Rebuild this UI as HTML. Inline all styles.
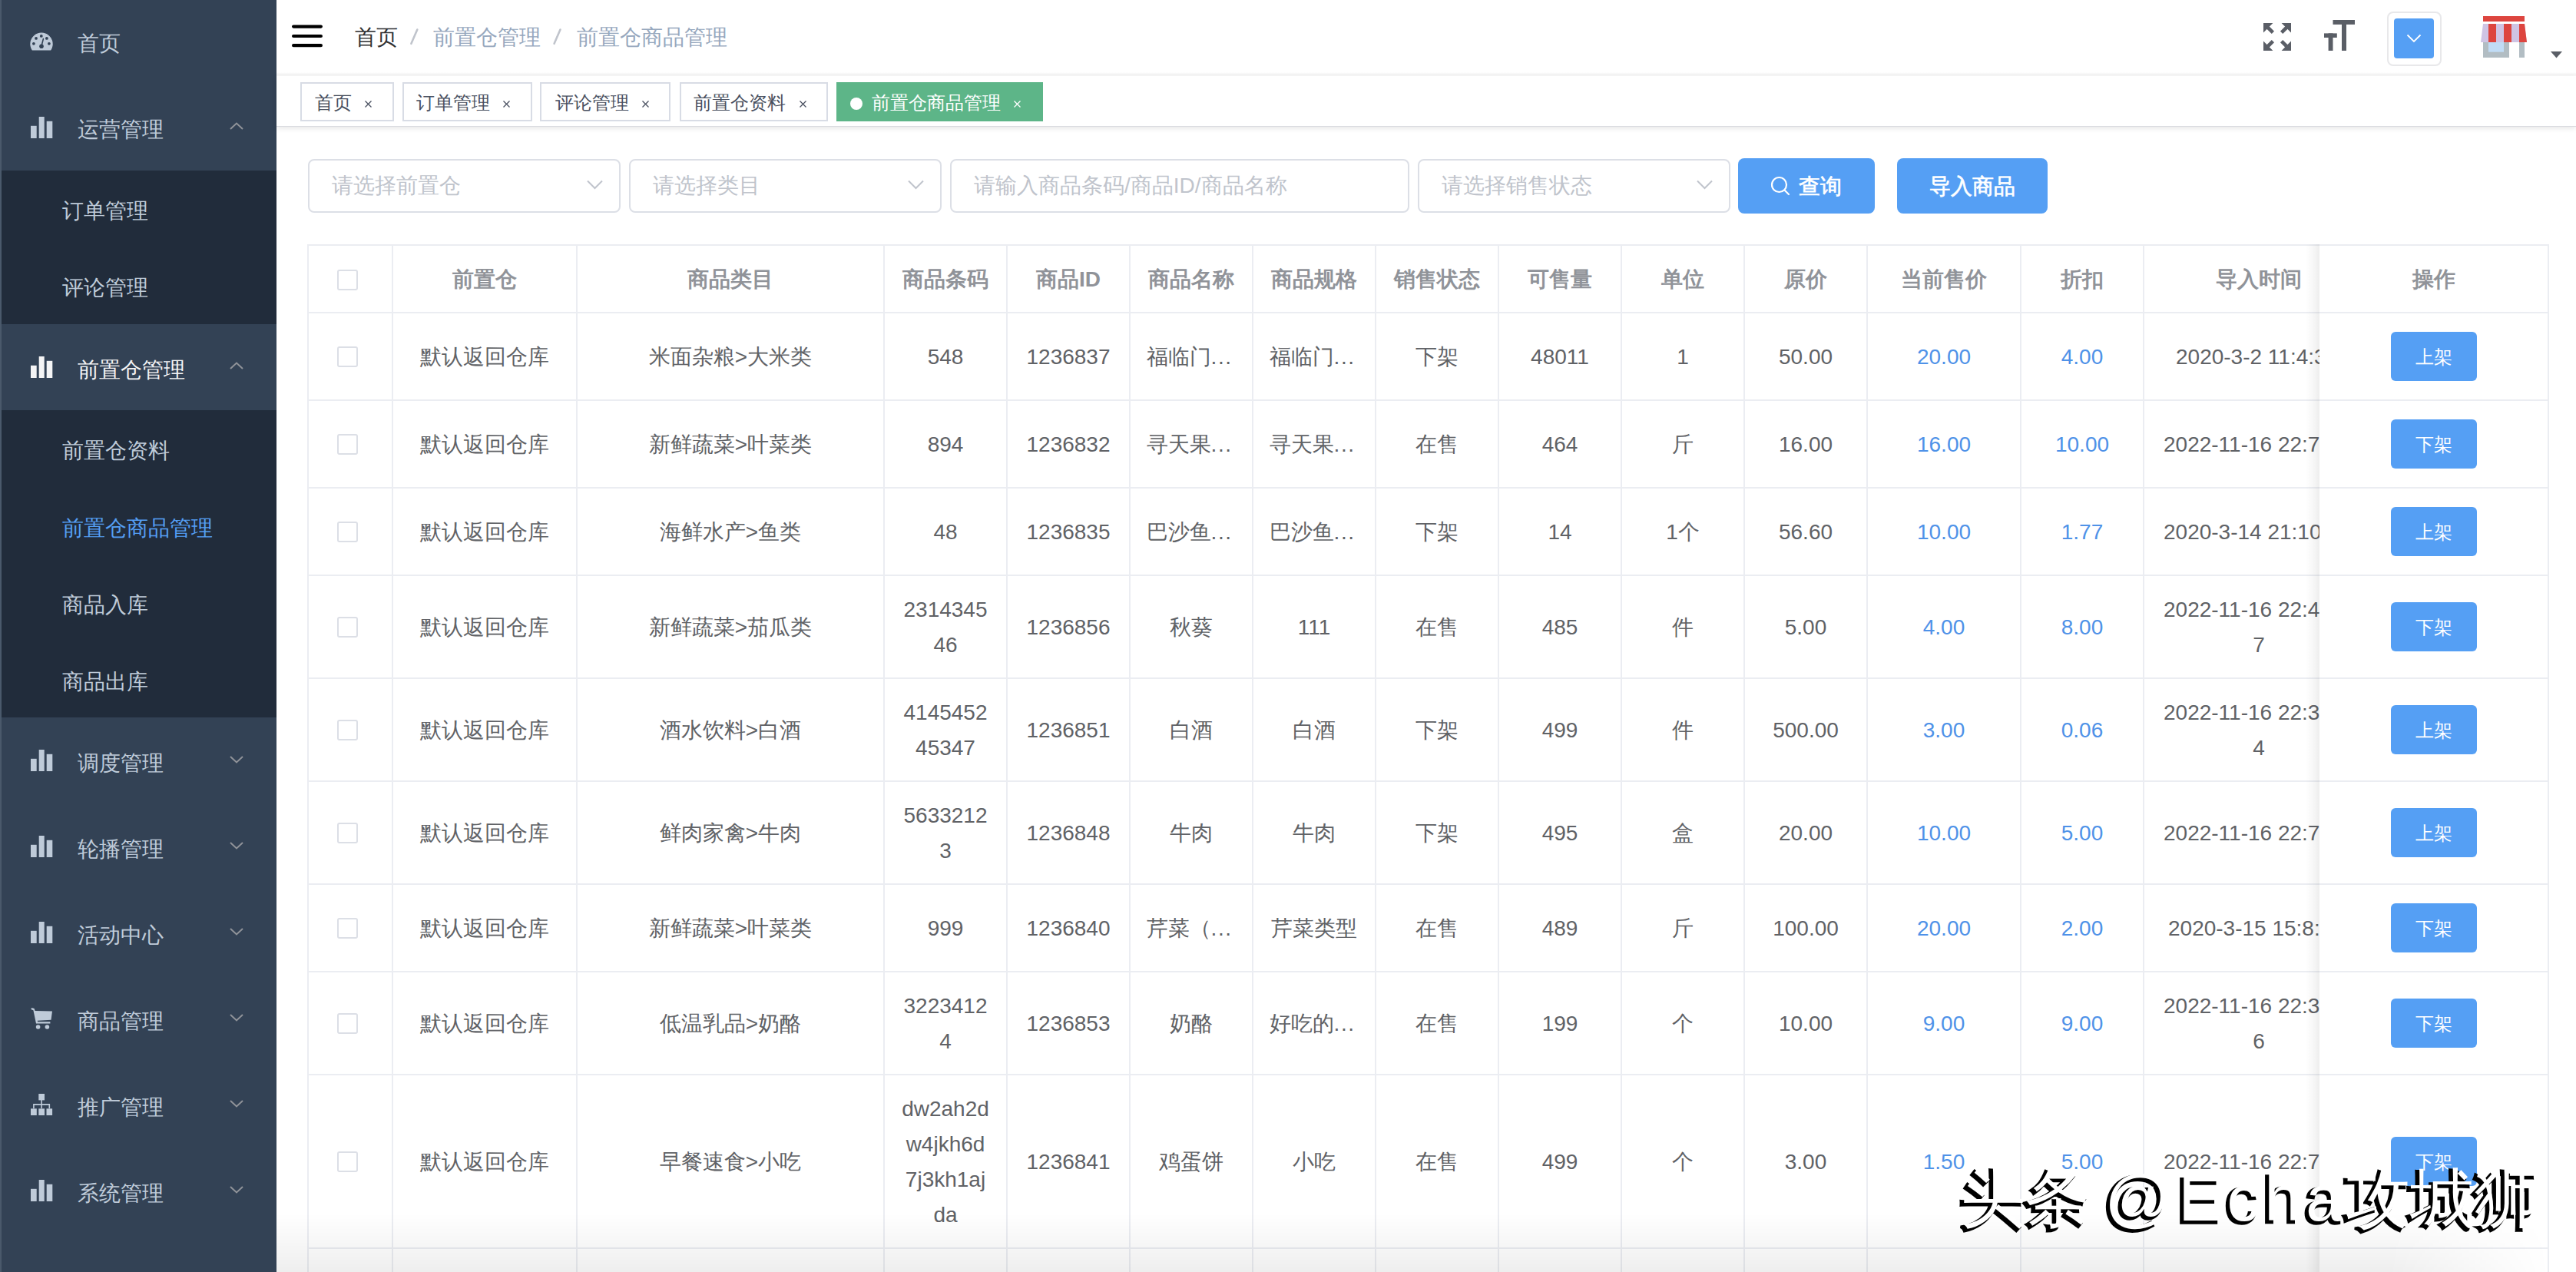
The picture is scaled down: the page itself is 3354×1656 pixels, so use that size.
<!DOCTYPE html><html><head><meta charset="utf-8"><style>
html,body{margin:0;padding:0;}
body{width:3354px;height:1656px;overflow:hidden;position:relative;background:#fff;font-family:"Liberation Sans",sans-serif;}
.a{position:absolute;}
.t{position:absolute;white-space:nowrap;}
svg{position:absolute;overflow:visible;}
</style></head><body><div class="a" style="left:0px;top:0px;width:360px;height:1656px;background:#334255;"></div><div class="a" style="left:0px;top:0px;width:2px;height:1656px;background:#4a596b;"></div><div class="a" style="left:2px;top:222px;width:358px;height:200px;background:#212c3b;"></div><div class="a" style="left:2px;top:534.2px;width:358px;height:400px;background:#212c3b;"></div><svg style="left:34px;top:36px" width="40" height="36" viewBox="34 36 40 36"><path d="M42.2 65 A14.1 14.1 0 1 1 65.8 65 Z" fill="#bfcbd9" stroke="#bfcbd9" stroke-width="1.2" stroke-linejoin="round"/><g fill="#334255"><circle cx="53.8" cy="46.9" r="1.9"/><circle cx="47" cy="49.9" r="1.9"/><circle cx="60.9" cy="49.9" r="1.9"/><circle cx="43.9" cy="56.8" r="1.9"/><circle cx="63.9" cy="56.8" r="1.9"/><circle cx="54" cy="60.2" r="2.8"/></g><path d="M54 60 L56.4 50.6" stroke="#334255" stroke-width="1.6" stroke-linecap="round"/></svg><div class="t" style="left:100.5px;top:37.0px;font-size:28px;line-height:40px;color:#bfcbd9;font-weight:normal;">首页</div><svg style="left:40px;top:152px" width="28" height="28" viewBox="0 0 28 28"><rect x="0" y="11.8" width="7.7" height="16.2" fill="#bfcbd9"/><rect x="10.7" y="0" width="7" height="28" fill="#bfcbd9"/><rect x="20.7" y="5.8" width="7.6" height="22.2" fill="#bfcbd9"/></svg><div class="t" style="left:100.5px;top:149.2px;font-size:28px;line-height:40px;color:#bfcbd9;font-weight:normal;">运营管理</div><svg style="left:298.5px;top:158.5px" width="18" height="10" viewBox="0 0 18 10"><path d="M1 9 L9 1.5 L17 9" fill="none" stroke="#909399" stroke-width="2"/></svg><div class="t" style="left:80.5px;top:255.2px;font-size:28px;line-height:40px;color:#bfcbd9;font-weight:normal;">订单管理</div><div class="t" style="left:80.5px;top:355.2px;font-size:28px;line-height:40px;color:#bfcbd9;font-weight:normal;">评论管理</div><svg style="left:40px;top:464px" width="28" height="28" viewBox="0 0 28 28"><rect x="0" y="11.8" width="7.7" height="16.2" fill="#f4f4f5"/><rect x="10.7" y="0" width="7" height="28" fill="#f4f4f5"/><rect x="20.7" y="5.8" width="7.6" height="22.2" fill="#f4f4f5"/></svg><div class="t" style="left:100.5px;top:461.6px;font-size:28px;line-height:40px;color:#f4f4f5;font-weight:normal;">前置仓管理</div><svg style="left:298.5px;top:470.5px" width="18" height="10" viewBox="0 0 18 10"><path d="M1 9 L9 1.5 L17 9" fill="none" stroke="#909399" stroke-width="2"/></svg><div class="t" style="left:80.5px;top:567.3px;font-size:28px;line-height:40px;color:#bfcbd9;font-weight:normal;">前置仓资料</div><div class="t" style="left:80.5px;top:668.0px;font-size:28px;line-height:40px;color:#559ff4;font-weight:normal;">前置仓商品管理</div><div class="t" style="left:80.5px;top:767.8px;font-size:28px;line-height:40px;color:#bfcbd9;font-weight:normal;">商品入库</div><div class="t" style="left:80.5px;top:867.8px;font-size:28px;line-height:40px;color:#bfcbd9;font-weight:normal;">商品出库</div><svg style="left:40px;top:976.1px" width="28" height="28" viewBox="0 0 28 28"><rect x="0" y="11.8" width="7.7" height="16.2" fill="#bfcbd9"/><rect x="10.7" y="0" width="7" height="28" fill="#bfcbd9"/><rect x="20.7" y="5.8" width="7.6" height="22.2" fill="#bfcbd9"/></svg><div class="t" style="left:100.5px;top:974.1px;font-size:28px;line-height:40px;color:#bfcbd9;font-weight:normal;">调度管理</div><svg style="left:299px;top:983.65px" width="18" height="10" viewBox="0 0 18 10"><path d="M1 1 L9 8.5 L17 1" fill="none" stroke="#909399" stroke-width="2"/></svg><svg style="left:40px;top:1088.1px" width="28" height="28" viewBox="0 0 28 28"><rect x="0" y="11.8" width="7.7" height="16.2" fill="#bfcbd9"/><rect x="10.7" y="0" width="7" height="28" fill="#bfcbd9"/><rect x="20.7" y="5.8" width="7.6" height="22.2" fill="#bfcbd9"/></svg><div class="t" style="left:100.5px;top:1086.1px;font-size:28px;line-height:40px;color:#bfcbd9;font-weight:normal;">轮播管理</div><svg style="left:299px;top:1095.6499999999999px" width="18" height="10" viewBox="0 0 18 10"><path d="M1 1 L9 8.5 L17 1" fill="none" stroke="#909399" stroke-width="2"/></svg><svg style="left:40px;top:1200.1px" width="28" height="28" viewBox="0 0 28 28"><rect x="0" y="11.8" width="7.7" height="16.2" fill="#bfcbd9"/><rect x="10.7" y="0" width="7" height="28" fill="#bfcbd9"/><rect x="20.7" y="5.8" width="7.6" height="22.2" fill="#bfcbd9"/></svg><div class="t" style="left:100.5px;top:1198.1px;font-size:28px;line-height:40px;color:#bfcbd9;font-weight:normal;">活动中心</div><svg style="left:299px;top:1207.6499999999999px" width="18" height="10" viewBox="0 0 18 10"><path d="M1 1 L9 8.5 L17 1" fill="none" stroke="#909399" stroke-width="2"/></svg><svg style="left:40px;top:1312.1px" width="28" height="28" viewBox="0 0 28 28"><path d="M0.5 1.2 Q0.5 0 2 0.2 L4.6 0.9 L5.6 4 L28 4.5 L26.5 15.8 L8.8 16.8 L9 18.2 L25.4 18.2 L25.4 20.6 L7 20.6 L3.4 3.2 L1.4 2.6 Q0.5 2.4 0.5 1.2 Z" fill="#bfcbd9"/><circle cx="9.6" cy="25" r="2.8" fill="#bfcbd9"/><circle cx="21.4" cy="25" r="2.8" fill="#bfcbd9"/></svg><div class="t" style="left:100.5px;top:1310.1px;font-size:28px;line-height:40px;color:#bfcbd9;font-weight:normal;">商品管理</div><svg style="left:299px;top:1319.6499999999999px" width="18" height="10" viewBox="0 0 18 10"><path d="M1 1 L9 8.5 L17 1" fill="none" stroke="#909399" stroke-width="2"/></svg><svg style="left:40px;top:1424.1px" width="28" height="28" viewBox="0 0 28 28"><rect x="10.3" y="0" width="7.7" height="8.4" fill="#bfcbd9"/><path d="M14.1 8 V19 M3.9 19 V13.9 H24.3 V19" fill="none" stroke="#bfcbd9" stroke-width="1.6"/><rect x="0" y="19.3" width="7.8" height="8.7" fill="#bfcbd9"/><rect x="10.3" y="19.3" width="7.7" height="8.7" fill="#bfcbd9"/><rect x="20.5" y="19.3" width="7.6" height="8.7" fill="#bfcbd9"/></svg><div class="t" style="left:100.5px;top:1422.1px;font-size:28px;line-height:40px;color:#bfcbd9;font-weight:normal;">推广管理</div><svg style="left:299px;top:1431.6499999999999px" width="18" height="10" viewBox="0 0 18 10"><path d="M1 1 L9 8.5 L17 1" fill="none" stroke="#909399" stroke-width="2"/></svg><svg style="left:40px;top:1536.1px" width="28" height="28" viewBox="0 0 28 28"><rect x="0" y="11.8" width="7.7" height="16.2" fill="#bfcbd9"/><rect x="10.7" y="0" width="7" height="28" fill="#bfcbd9"/><rect x="20.7" y="5.8" width="7.6" height="22.2" fill="#bfcbd9"/></svg><div class="t" style="left:100.5px;top:1534.1px;font-size:28px;line-height:40px;color:#bfcbd9;font-weight:normal;">系统管理</div><svg style="left:299px;top:1543.6499999999999px" width="18" height="10" viewBox="0 0 18 10"><path d="M1 1 L9 8.5 L17 1" fill="none" stroke="#909399" stroke-width="2"/></svg><div class="a" style="left:360px;top:94px;width:2994px;height:6px;background:linear-gradient(to bottom,rgba(0,0,0,0),rgba(0,0,0,.045) 50%,rgba(0,0,0,0));"></div><svg style="left:378px;top:30px" width="44" height="34" viewBox="0 0 44 34"><path d="M4.1 4.6 H39.9 M4.1 17 H39.9 M4.1 29.2 H39.9" stroke="#000" stroke-width="4.2" stroke-linecap="round"/></svg><div class="t" style="left:461.5px;top:28.5px;font-size:28px;line-height:40px;color:#303133;font-weight:normal;">首页</div><svg style="left:530px;top:34px" width="18" height="28" viewBox="530 34 18 28"><path d="M535.4 56.8 L543.3 38.5" stroke="#c0c4cc" stroke-width="2.6" stroke-linecap="round"/></svg><div class="t" style="left:563.5px;top:28.5px;font-size:28px;line-height:40px;color:#97a8be;font-weight:normal;">前置仓管理</div><svg style="left:716px;top:34px" width="18" height="28" viewBox="716 34 18 28"><path d="M721.6 56.8 L729.5 38.5" stroke="#c0c4cc" stroke-width="2.6" stroke-linecap="round"/></svg><div class="t" style="left:750.5px;top:28.5px;font-size:28px;line-height:40px;color:#97a8be;font-weight:normal;">前置仓商品管理</div><svg style="left:2947px;top:30px" width="36" height="36" viewBox="0 0 36 36"><g fill="#5a5e66"><path d="M0 0 H12.4 L0 12.4 Z M36 0 H23.6 L36 12.4 Z M0 36 H12.4 L0 23.6 Z M36 36 H23.6 L36 23.6 Z"/></g><g stroke="#5a5e66" stroke-width="4.6"><path d="M4 4 L12.4 12.4 M32 4 L23.6 12.4 M4 32 L12.4 23.6 M32 32 L23.6 23.6"/></g></svg><svg style="left:3026px;top:26px" width="40" height="40" viewBox="0 0 40 40"><g fill="#5a5e66"><rect x="0" y="17.4" width="16.8" height="5.6"/><rect x="5.6" y="17.4" width="5.9" height="22.6"/><rect x="11.5" y="0" width="28.5" height="5.9"/><rect x="23" y="0" width="6" height="40"/></g></svg><div class="a" style="left:3107.5px;top:14.5px;width:67.5px;height:67px;border:2px solid #e8e8ea;border-radius:8px;"></div><div class="a" style="left:3117px;top:24px;width:52px;height:51.5px;background:#559ff4;border-radius:4px;"></div><svg style="left:3133px;top:44px" width="20" height="12" viewBox="0 0 20 12"><path d="M1.5 1.5 L10 10 L18.5 1.5" fill="none" stroke="#fff" stroke-width="1.8"/></svg><svg style="left:3230px;top:21px" width="60" height="54" viewBox="0 0 60 54"><rect x="3" y="0" width="54" height="7" fill="#dd453f"/><path d="M3 10 H57 L60 34 H0 Z" fill="#cfc4e4"/><path d="M10 10 H20 V34 H10 Z M30 10 H40 V34 H30 Z M50 10 H57 L60 34 H50 Z" fill="#dd453f"/><rect x="3" y="34" width="34" height="20" fill="#b2bdc3"/><rect x="10" y="34" width="20" height="12.7" fill="#c1dcf6"/><rect x="50" y="34" width="7" height="20" fill="#b2bdc3"/></svg><svg style="left:3321px;top:67px" width="15" height="9" viewBox="0 0 15 9"><path d="M0 0 H15 L7.5 8.5 Z" fill="#5a5e66"/></svg><div class="a" style="left:360px;top:99px;width:2994px;height:64.7px;background:#fff;border-bottom:1.6px solid #d9dadf;box-shadow:0 2px 7px 0 rgba(0,0,0,.10);"></div><div class="a" style="left:390.5px;top:106.5px;width:118.0px;height:47px;border:2px solid #d8dce5;background:#fff;"></div><div class="t" style="left:409.5px;top:114.4px;font-size:24px;line-height:40px;color:#495060;font-weight:normal;">首页</div><svg style="left:475px;top:131px" width="9" height="9" viewBox="0 0 9 9"><path d="M0.5 0.5 L8.5 8.5 M8.5 0.5 L0.5 8.5" stroke="#495060" stroke-width="1.3"/></svg><div class="a" style="left:523.5px;top:106.5px;width:165.0px;height:47px;border:2px solid #d8dce5;background:#fff;"></div><div class="t" style="left:542px;top:114.4px;font-size:24px;line-height:40px;color:#495060;font-weight:normal;">订单管理</div><svg style="left:654.5px;top:131px" width="9" height="9" viewBox="0 0 9 9"><path d="M0.5 0.5 L8.5 8.5 M8.5 0.5 L0.5 8.5" stroke="#495060" stroke-width="1.3"/></svg><div class="a" style="left:703px;top:106.5px;width:166px;height:47px;border:2px solid #d8dce5;background:#fff;"></div><div class="t" style="left:722.5px;top:114.4px;font-size:24px;line-height:40px;color:#495060;font-weight:normal;">评论管理</div><svg style="left:835.5px;top:131px" width="9" height="9" viewBox="0 0 9 9"><path d="M0.5 0.5 L8.5 8.5 M8.5 0.5 L0.5 8.5" stroke="#495060" stroke-width="1.3"/></svg><div class="a" style="left:884.6px;top:106.5px;width:189.80000000000007px;height:47px;border:2px solid #d8dce5;background:#fff;"></div><div class="t" style="left:903px;top:114.4px;font-size:24px;line-height:40px;color:#495060;font-weight:normal;">前置仓资料</div><svg style="left:1040.7px;top:131px" width="9" height="9" viewBox="0 0 9 9"><path d="M0.5 0.5 L8.5 8.5 M8.5 0.5 L0.5 8.5" stroke="#495060" stroke-width="1.3"/></svg><div class="a" style="left:1089px;top:106.5px;width:269px;height:51px;background:#5db588;"></div><div class="a" style="left:1106.7px;top:126.5px;width:16.3px;height:16.3px;background:#fff;border-radius:50%;"></div><div class="t" style="left:1134.5px;top:114.4px;font-size:24px;line-height:40px;color:#fff;font-weight:normal;">前置仓商品管理</div><svg style="left:1320px;top:131px" width="9" height="9" viewBox="0 0 9 9"><path d="M0.5 0.5 L8.5 8.5 M8.5 0.5 L0.5 8.5" stroke="#fff" stroke-width="1.3"/></svg><div class="a" style="left:401px;top:206.5px;width:403px;height:66.5px;border:2px solid #dcdfe6;border-radius:8px;background:#fff;"></div><div class="t" style="left:432px;top:222.0px;font-size:28px;line-height:40px;color:#c0c4cc;font-weight:normal;">请选择前置仓</div><svg style="left:763.5px;top:234px" width="21" height="13" viewBox="0 0 21 13"><path d="M1 1.5 L10.5 11 L20 1.5" fill="none" stroke="#c0c4cc" stroke-width="2"/></svg><div class="a" style="left:819px;top:206.5px;width:403px;height:66.5px;border:2px solid #dcdfe6;border-radius:8px;background:#fff;"></div><div class="t" style="left:850px;top:222.0px;font-size:28px;line-height:40px;color:#c0c4cc;font-weight:normal;">请选择类目</div><svg style="left:1181.5px;top:234px" width="21" height="13" viewBox="0 0 21 13"><path d="M1 1.5 L10.5 11 L20 1.5" fill="none" stroke="#c0c4cc" stroke-width="2"/></svg><div class="a" style="left:1237px;top:206.5px;width:594px;height:66.5px;border:2px solid #dcdfe6;border-radius:8px;background:#fff;"></div><div class="t" style="left:1268px;top:222.0px;font-size:28px;line-height:40px;color:#c0c4cc;font-weight:normal;">请输入商品条码/商品ID/商品名称</div><div class="a" style="left:1846px;top:206.5px;width:403px;height:66.5px;border:2px solid #dcdfe6;border-radius:8px;background:#fff;"></div><div class="t" style="left:1877px;top:222.0px;font-size:28px;line-height:40px;color:#c0c4cc;font-weight:normal;">请选择销售状态</div><svg style="left:2208.5px;top:234px" width="21" height="13" viewBox="0 0 21 13"><path d="M1 1.5 L10.5 11 L20 1.5" fill="none" stroke="#c0c4cc" stroke-width="2"/></svg><div class="a" style="left:2263px;top:206px;width:178px;height:71.5px;background:#559ff4;border-radius:8px;"></div><svg style="left:2305px;top:229px" width="26" height="26" viewBox="0 0 26 26"><circle cx="11.5" cy="11.5" r="9.5" fill="none" stroke="#fff" stroke-width="2.2"/><path d="M18.5 18.5 L24 24" stroke="#fff" stroke-width="2.2" stroke-linecap="round"/></svg><div class="t" style="left:2342px;top:222.8px;font-size:28px;line-height:40px;color:#fff;font-weight:normal;-webkit-text-stroke:0.7px #fff;">查询</div><div class="a" style="left:2470px;top:206px;width:196px;height:71.5px;background:#559ff4;border-radius:8px;"></div><div class="t" style="left:2512px;top:222.8px;font-size:28px;line-height:40px;color:#fff;font-weight:normal;-webkit-text-stroke:0.7px #fff;">导入商品</div><div class="a" style="left:400px;top:318px;width:2919px;height:2px;background:#ebedf2;"></div><div class="a" style="left:400px;top:406px;width:2919px;height:2px;background:#ebedf2;"></div><div class="a" style="left:400px;top:520px;width:2919px;height:2px;background:#ebedf2;"></div><div class="a" style="left:400px;top:634px;width:2919px;height:2px;background:#ebedf2;"></div><div class="a" style="left:400px;top:748px;width:2919px;height:2px;background:#ebedf2;"></div><div class="a" style="left:400px;top:882px;width:2919px;height:2px;background:#ebedf2;"></div><div class="a" style="left:400px;top:1016px;width:2919px;height:2px;background:#ebedf2;"></div><div class="a" style="left:400px;top:1150px;width:2919px;height:2px;background:#ebedf2;"></div><div class="a" style="left:400px;top:1264px;width:2919px;height:2px;background:#ebedf2;"></div><div class="a" style="left:400px;top:1398px;width:2919px;height:2px;background:#ebedf2;"></div><div class="a" style="left:400px;top:1624px;width:2919px;height:2px;background:#ebedf2;"></div><div class="a" style="left:400px;top:318px;width:2px;height:1338px;background:#ebedf2;"></div><div class="a" style="left:510px;top:318px;width:2px;height:1338px;background:#ebedf2;"></div><div class="a" style="left:750px;top:318px;width:2px;height:1338px;background:#ebedf2;"></div><div class="a" style="left:1150px;top:318px;width:2px;height:1338px;background:#ebedf2;"></div><div class="a" style="left:1310px;top:318px;width:2px;height:1338px;background:#ebedf2;"></div><div class="a" style="left:1470px;top:318px;width:2px;height:1338px;background:#ebedf2;"></div><div class="a" style="left:1630px;top:318px;width:2px;height:1338px;background:#ebedf2;"></div><div class="a" style="left:1790px;top:318px;width:2px;height:1338px;background:#ebedf2;"></div><div class="a" style="left:1950px;top:318px;width:2px;height:1338px;background:#ebedf2;"></div><div class="a" style="left:2110px;top:318px;width:2px;height:1338px;background:#ebedf2;"></div><div class="a" style="left:2270px;top:318px;width:2px;height:1338px;background:#ebedf2;"></div><div class="a" style="left:2430px;top:318px;width:2px;height:1338px;background:#ebedf2;"></div><div class="a" style="left:2630px;top:318px;width:2px;height:1338px;background:#ebedf2;"></div><div class="a" style="left:2790px;top:318px;width:2px;height:1338px;background:#ebedf2;"></div><div class="a" style="left:438.5px;top:350.5px;width:23px;height:23px;border:2px solid #dcdfe6;border-radius:3px;background:#fff;"></div><div class="t" style="left:511px;top:344.0px;font-size:28px;line-height:40px;color:#909399;font-weight:bold;width:240px;text-align:center;">前置仓</div><div class="t" style="left:751px;top:344.0px;font-size:28px;line-height:40px;color:#909399;font-weight:bold;width:400px;text-align:center;">商品类目</div><div class="t" style="left:1151px;top:344.0px;font-size:28px;line-height:40px;color:#909399;font-weight:bold;width:160px;text-align:center;">商品条码</div><div class="t" style="left:1311px;top:344.0px;font-size:28px;line-height:40px;color:#909399;font-weight:bold;width:160px;text-align:center;">商品ID</div><div class="t" style="left:1471px;top:344.0px;font-size:28px;line-height:40px;color:#909399;font-weight:bold;width:160px;text-align:center;">商品名称</div><div class="t" style="left:1631px;top:344.0px;font-size:28px;line-height:40px;color:#909399;font-weight:bold;width:160px;text-align:center;">商品规格</div><div class="t" style="left:1791px;top:344.0px;font-size:28px;line-height:40px;color:#909399;font-weight:bold;width:160px;text-align:center;">销售状态</div><div class="t" style="left:1951px;top:344.0px;font-size:28px;line-height:40px;color:#909399;font-weight:bold;width:160px;text-align:center;">可售量</div><div class="t" style="left:2111px;top:344.0px;font-size:28px;line-height:40px;color:#909399;font-weight:bold;width:160px;text-align:center;">单位</div><div class="t" style="left:2271px;top:344.0px;font-size:28px;line-height:40px;color:#909399;font-weight:bold;width:160px;text-align:center;">原价</div><div class="t" style="left:2431px;top:344.0px;font-size:28px;line-height:40px;color:#909399;font-weight:bold;width:200px;text-align:center;">当前售价</div><div class="t" style="left:2631px;top:344.0px;font-size:28px;line-height:40px;color:#909399;font-weight:bold;width:160px;text-align:center;">折扣</div><div class="t" style="left:2791px;top:344.0px;font-size:28px;line-height:40px;color:#909399;font-weight:bold;width:300px;text-align:center;">导入时间</div><div class="a" style="left:438.5px;top:450.5px;width:23px;height:23px;border:2px solid #dcdfe6;border-radius:3px;background:#fff;"></div><div class="t" style="left:511px;top:445.0px;font-size:28px;line-height:40px;color:#606266;font-weight:normal;width:240px;text-align:center;">默认返回仓库</div><div class="t" style="left:751px;top:445.0px;font-size:28px;line-height:40px;color:#606266;font-weight:normal;width:400px;text-align:center;">米面杂粮&gt;大米类</div><div class="t" style="left:1151px;top:445.0px;font-size:28px;line-height:40px;color:#606266;font-weight:normal;width:160px;text-align:center;">548</div><div class="t" style="left:1311px;top:445.0px;font-size:28px;line-height:40px;color:#606266;font-weight:normal;width:160px;text-align:center;">1236837</div><div class="t" style="left:1492.5px;top:445.0px;font-size:28px;line-height:40px;color:#606266;font-weight:normal;">福临门<span style="letter-spacing:1.6px">...</span></div><div class="t" style="left:1652.5px;top:445.0px;font-size:28px;line-height:40px;color:#606266;font-weight:normal;">福临门<span style="letter-spacing:1.6px">...</span></div><div class="t" style="left:1791px;top:445.0px;font-size:28px;line-height:40px;color:#606266;font-weight:normal;width:160px;text-align:center;">下架</div><div class="t" style="left:1951px;top:445.0px;font-size:28px;line-height:40px;color:#606266;font-weight:normal;width:160px;text-align:center;">48011</div><div class="t" style="left:2111px;top:445.0px;font-size:28px;line-height:40px;color:#606266;font-weight:normal;width:160px;text-align:center;">1</div><div class="t" style="left:2271px;top:445.0px;font-size:28px;line-height:40px;color:#606266;font-weight:normal;width:160px;text-align:center;">50.00</div><div class="t" style="left:2431px;top:445.0px;font-size:28px;line-height:40px;color:#4f92e8;font-weight:normal;width:200px;text-align:center;">20.00</div><div class="t" style="left:2631px;top:445.0px;font-size:28px;line-height:40px;color:#4f92e8;font-weight:normal;width:160px;text-align:center;">4.00</div><div class="t" style="left:2833px;top:445.0px;font-size:28px;line-height:40px;color:#606266;font-weight:normal;">2020-3-2 11:4:36</div><div class="a" style="left:438.5px;top:564.5px;width:23px;height:23px;border:2px solid #dcdfe6;border-radius:3px;background:#fff;"></div><div class="t" style="left:511px;top:559.0px;font-size:28px;line-height:40px;color:#606266;font-weight:normal;width:240px;text-align:center;">默认返回仓库</div><div class="t" style="left:751px;top:559.0px;font-size:28px;line-height:40px;color:#606266;font-weight:normal;width:400px;text-align:center;">新鲜蔬菜&gt;叶菜类</div><div class="t" style="left:1151px;top:559.0px;font-size:28px;line-height:40px;color:#606266;font-weight:normal;width:160px;text-align:center;">894</div><div class="t" style="left:1311px;top:559.0px;font-size:28px;line-height:40px;color:#606266;font-weight:normal;width:160px;text-align:center;">1236832</div><div class="t" style="left:1492.5px;top:559.0px;font-size:28px;line-height:40px;color:#606266;font-weight:normal;">寻天果<span style="letter-spacing:1.6px">...</span></div><div class="t" style="left:1652.5px;top:559.0px;font-size:28px;line-height:40px;color:#606266;font-weight:normal;">寻天果<span style="letter-spacing:1.6px">...</span></div><div class="t" style="left:1791px;top:559.0px;font-size:28px;line-height:40px;color:#606266;font-weight:normal;width:160px;text-align:center;">在售</div><div class="t" style="left:1951px;top:559.0px;font-size:28px;line-height:40px;color:#606266;font-weight:normal;width:160px;text-align:center;">464</div><div class="t" style="left:2111px;top:559.0px;font-size:28px;line-height:40px;color:#606266;font-weight:normal;width:160px;text-align:center;">斤</div><div class="t" style="left:2271px;top:559.0px;font-size:28px;line-height:40px;color:#606266;font-weight:normal;width:160px;text-align:center;">16.00</div><div class="t" style="left:2431px;top:559.0px;font-size:28px;line-height:40px;color:#4f92e8;font-weight:normal;width:200px;text-align:center;">16.00</div><div class="t" style="left:2631px;top:559.0px;font-size:28px;line-height:40px;color:#4f92e8;font-weight:normal;width:160px;text-align:center;">10.00</div><div class="t" style="left:2817px;top:559.0px;font-size:28px;line-height:40px;color:#606266;font-weight:normal;">2022-11-16 22:7:5</div><div class="a" style="left:438.5px;top:678.5px;width:23px;height:23px;border:2px solid #dcdfe6;border-radius:3px;background:#fff;"></div><div class="t" style="left:511px;top:673.0px;font-size:28px;line-height:40px;color:#606266;font-weight:normal;width:240px;text-align:center;">默认返回仓库</div><div class="t" style="left:751px;top:673.0px;font-size:28px;line-height:40px;color:#606266;font-weight:normal;width:400px;text-align:center;">海鲜水产&gt;鱼类</div><div class="t" style="left:1151px;top:673.0px;font-size:28px;line-height:40px;color:#606266;font-weight:normal;width:160px;text-align:center;">48</div><div class="t" style="left:1311px;top:673.0px;font-size:28px;line-height:40px;color:#606266;font-weight:normal;width:160px;text-align:center;">1236835</div><div class="t" style="left:1492.5px;top:673.0px;font-size:28px;line-height:40px;color:#606266;font-weight:normal;">巴沙鱼<span style="letter-spacing:1.6px">...</span></div><div class="t" style="left:1652.5px;top:673.0px;font-size:28px;line-height:40px;color:#606266;font-weight:normal;">巴沙鱼<span style="letter-spacing:1.6px">...</span></div><div class="t" style="left:1791px;top:673.0px;font-size:28px;line-height:40px;color:#606266;font-weight:normal;width:160px;text-align:center;">下架</div><div class="t" style="left:1951px;top:673.0px;font-size:28px;line-height:40px;color:#606266;font-weight:normal;width:160px;text-align:center;">14</div><div class="t" style="left:2111px;top:673.0px;font-size:28px;line-height:40px;color:#606266;font-weight:normal;width:160px;text-align:center;">1个</div><div class="t" style="left:2271px;top:673.0px;font-size:28px;line-height:40px;color:#606266;font-weight:normal;width:160px;text-align:center;">56.60</div><div class="t" style="left:2431px;top:673.0px;font-size:28px;line-height:40px;color:#4f92e8;font-weight:normal;width:200px;text-align:center;">10.00</div><div class="t" style="left:2631px;top:673.0px;font-size:28px;line-height:40px;color:#4f92e8;font-weight:normal;width:160px;text-align:center;">1.77</div><div class="t" style="left:2817px;top:673.0px;font-size:28px;line-height:40px;color:#606266;font-weight:normal;">2020-3-14 21:10</div><div class="a" style="left:438.5px;top:802.5px;width:23px;height:23px;border:2px solid #dcdfe6;border-radius:3px;background:#fff;"></div><div class="t" style="left:511px;top:797.0px;font-size:28px;line-height:40px;color:#606266;font-weight:normal;width:240px;text-align:center;">默认返回仓库</div><div class="t" style="left:751px;top:797.0px;font-size:28px;line-height:40px;color:#606266;font-weight:normal;width:400px;text-align:center;">新鲜蔬菜&gt;茄瓜类</div><div class="t" style="left:1151px;top:774.0px;font-size:28px;line-height:40px;color:#606266;font-weight:normal;width:160px;text-align:center;">2314345</div><div class="t" style="left:1151px;top:820.0px;font-size:28px;line-height:40px;color:#606266;font-weight:normal;width:160px;text-align:center;">46</div><div class="t" style="left:1311px;top:797.0px;font-size:28px;line-height:40px;color:#606266;font-weight:normal;width:160px;text-align:center;">1236856</div><div class="t" style="left:1471px;top:797.0px;font-size:28px;line-height:40px;color:#606266;font-weight:normal;width:160px;text-align:center;">秋葵</div><div class="t" style="left:1631px;top:797.0px;font-size:28px;line-height:40px;color:#606266;font-weight:normal;width:160px;text-align:center;">111</div><div class="t" style="left:1791px;top:797.0px;font-size:28px;line-height:40px;color:#606266;font-weight:normal;width:160px;text-align:center;">在售</div><div class="t" style="left:1951px;top:797.0px;font-size:28px;line-height:40px;color:#606266;font-weight:normal;width:160px;text-align:center;">485</div><div class="t" style="left:2111px;top:797.0px;font-size:28px;line-height:40px;color:#606266;font-weight:normal;width:160px;text-align:center;">件</div><div class="t" style="left:2271px;top:797.0px;font-size:28px;line-height:40px;color:#606266;font-weight:normal;width:160px;text-align:center;">5.00</div><div class="t" style="left:2431px;top:797.0px;font-size:28px;line-height:40px;color:#4f92e8;font-weight:normal;width:200px;text-align:center;">4.00</div><div class="t" style="left:2631px;top:797.0px;font-size:28px;line-height:40px;color:#4f92e8;font-weight:normal;width:160px;text-align:center;">8.00</div><div class="t" style="left:2817px;top:774.0px;font-size:28px;line-height:40px;color:#606266;font-weight:normal;">2022-11-16 22:4</div><div class="t" style="left:2791px;top:820.0px;font-size:28px;line-height:40px;color:#606266;font-weight:normal;width:300px;text-align:center;">7</div><div class="a" style="left:438.5px;top:936.5px;width:23px;height:23px;border:2px solid #dcdfe6;border-radius:3px;background:#fff;"></div><div class="t" style="left:511px;top:931.0px;font-size:28px;line-height:40px;color:#606266;font-weight:normal;width:240px;text-align:center;">默认返回仓库</div><div class="t" style="left:751px;top:931.0px;font-size:28px;line-height:40px;color:#606266;font-weight:normal;width:400px;text-align:center;">酒水饮料&gt;白酒</div><div class="t" style="left:1151px;top:908.0px;font-size:28px;line-height:40px;color:#606266;font-weight:normal;width:160px;text-align:center;">4145452</div><div class="t" style="left:1151px;top:954.0px;font-size:28px;line-height:40px;color:#606266;font-weight:normal;width:160px;text-align:center;">45347</div><div class="t" style="left:1311px;top:931.0px;font-size:28px;line-height:40px;color:#606266;font-weight:normal;width:160px;text-align:center;">1236851</div><div class="t" style="left:1471px;top:931.0px;font-size:28px;line-height:40px;color:#606266;font-weight:normal;width:160px;text-align:center;">白酒</div><div class="t" style="left:1631px;top:931.0px;font-size:28px;line-height:40px;color:#606266;font-weight:normal;width:160px;text-align:center;">白酒</div><div class="t" style="left:1791px;top:931.0px;font-size:28px;line-height:40px;color:#606266;font-weight:normal;width:160px;text-align:center;">下架</div><div class="t" style="left:1951px;top:931.0px;font-size:28px;line-height:40px;color:#606266;font-weight:normal;width:160px;text-align:center;">499</div><div class="t" style="left:2111px;top:931.0px;font-size:28px;line-height:40px;color:#606266;font-weight:normal;width:160px;text-align:center;">件</div><div class="t" style="left:2271px;top:931.0px;font-size:28px;line-height:40px;color:#606266;font-weight:normal;width:160px;text-align:center;">500.00</div><div class="t" style="left:2431px;top:931.0px;font-size:28px;line-height:40px;color:#4f92e8;font-weight:normal;width:200px;text-align:center;">3.00</div><div class="t" style="left:2631px;top:931.0px;font-size:28px;line-height:40px;color:#4f92e8;font-weight:normal;width:160px;text-align:center;">0.06</div><div class="t" style="left:2817px;top:908.0px;font-size:28px;line-height:40px;color:#606266;font-weight:normal;">2022-11-16 22:3</div><div class="t" style="left:2791px;top:954.0px;font-size:28px;line-height:40px;color:#606266;font-weight:normal;width:300px;text-align:center;">4</div><div class="a" style="left:438.5px;top:1070.5px;width:23px;height:23px;border:2px solid #dcdfe6;border-radius:3px;background:#fff;"></div><div class="t" style="left:511px;top:1065.0px;font-size:28px;line-height:40px;color:#606266;font-weight:normal;width:240px;text-align:center;">默认返回仓库</div><div class="t" style="left:751px;top:1065.0px;font-size:28px;line-height:40px;color:#606266;font-weight:normal;width:400px;text-align:center;">鲜肉家禽&gt;牛肉</div><div class="t" style="left:1151px;top:1042.0px;font-size:28px;line-height:40px;color:#606266;font-weight:normal;width:160px;text-align:center;">5633212</div><div class="t" style="left:1151px;top:1088.0px;font-size:28px;line-height:40px;color:#606266;font-weight:normal;width:160px;text-align:center;">3</div><div class="t" style="left:1311px;top:1065.0px;font-size:28px;line-height:40px;color:#606266;font-weight:normal;width:160px;text-align:center;">1236848</div><div class="t" style="left:1471px;top:1065.0px;font-size:28px;line-height:40px;color:#606266;font-weight:normal;width:160px;text-align:center;">牛肉</div><div class="t" style="left:1631px;top:1065.0px;font-size:28px;line-height:40px;color:#606266;font-weight:normal;width:160px;text-align:center;">牛肉</div><div class="t" style="left:1791px;top:1065.0px;font-size:28px;line-height:40px;color:#606266;font-weight:normal;width:160px;text-align:center;">下架</div><div class="t" style="left:1951px;top:1065.0px;font-size:28px;line-height:40px;color:#606266;font-weight:normal;width:160px;text-align:center;">495</div><div class="t" style="left:2111px;top:1065.0px;font-size:28px;line-height:40px;color:#606266;font-weight:normal;width:160px;text-align:center;">盒</div><div class="t" style="left:2271px;top:1065.0px;font-size:28px;line-height:40px;color:#606266;font-weight:normal;width:160px;text-align:center;">20.00</div><div class="t" style="left:2431px;top:1065.0px;font-size:28px;line-height:40px;color:#4f92e8;font-weight:normal;width:200px;text-align:center;">10.00</div><div class="t" style="left:2631px;top:1065.0px;font-size:28px;line-height:40px;color:#4f92e8;font-weight:normal;width:160px;text-align:center;">5.00</div><div class="t" style="left:2817px;top:1065.0px;font-size:28px;line-height:40px;color:#606266;font-weight:normal;">2022-11-16 22:7:3</div><div class="a" style="left:438.5px;top:1194.5px;width:23px;height:23px;border:2px solid #dcdfe6;border-radius:3px;background:#fff;"></div><div class="t" style="left:511px;top:1189.0px;font-size:28px;line-height:40px;color:#606266;font-weight:normal;width:240px;text-align:center;">默认返回仓库</div><div class="t" style="left:751px;top:1189.0px;font-size:28px;line-height:40px;color:#606266;font-weight:normal;width:400px;text-align:center;">新鲜蔬菜&gt;叶菜类</div><div class="t" style="left:1151px;top:1189.0px;font-size:28px;line-height:40px;color:#606266;font-weight:normal;width:160px;text-align:center;">999</div><div class="t" style="left:1311px;top:1189.0px;font-size:28px;line-height:40px;color:#606266;font-weight:normal;width:160px;text-align:center;">1236840</div><div class="t" style="left:1492.5px;top:1189.0px;font-size:28px;line-height:40px;color:#606266;font-weight:normal;">芹菜（<span style="letter-spacing:1.6px">...</span></div><div class="t" style="left:1631px;top:1189.0px;font-size:28px;line-height:40px;color:#606266;font-weight:normal;width:160px;text-align:center;">芹菜类型</div><div class="t" style="left:1791px;top:1189.0px;font-size:28px;line-height:40px;color:#606266;font-weight:normal;width:160px;text-align:center;">在售</div><div class="t" style="left:1951px;top:1189.0px;font-size:28px;line-height:40px;color:#606266;font-weight:normal;width:160px;text-align:center;">489</div><div class="t" style="left:2111px;top:1189.0px;font-size:28px;line-height:40px;color:#606266;font-weight:normal;width:160px;text-align:center;">斤</div><div class="t" style="left:2271px;top:1189.0px;font-size:28px;line-height:40px;color:#606266;font-weight:normal;width:160px;text-align:center;">100.00</div><div class="t" style="left:2431px;top:1189.0px;font-size:28px;line-height:40px;color:#4f92e8;font-weight:normal;width:200px;text-align:center;">20.00</div><div class="t" style="left:2631px;top:1189.0px;font-size:28px;line-height:40px;color:#4f92e8;font-weight:normal;width:160px;text-align:center;">2.00</div><div class="t" style="left:2823px;top:1189.0px;font-size:28px;line-height:40px;color:#606266;font-weight:normal;">2020-3-15 15:8:2</div><div class="a" style="left:438.5px;top:1318.5px;width:23px;height:23px;border:2px solid #dcdfe6;border-radius:3px;background:#fff;"></div><div class="t" style="left:511px;top:1313.0px;font-size:28px;line-height:40px;color:#606266;font-weight:normal;width:240px;text-align:center;">默认返回仓库</div><div class="t" style="left:751px;top:1313.0px;font-size:28px;line-height:40px;color:#606266;font-weight:normal;width:400px;text-align:center;">低温乳品&gt;奶酪</div><div class="t" style="left:1151px;top:1290.0px;font-size:28px;line-height:40px;color:#606266;font-weight:normal;width:160px;text-align:center;">3223412</div><div class="t" style="left:1151px;top:1336.0px;font-size:28px;line-height:40px;color:#606266;font-weight:normal;width:160px;text-align:center;">4</div><div class="t" style="left:1311px;top:1313.0px;font-size:28px;line-height:40px;color:#606266;font-weight:normal;width:160px;text-align:center;">1236853</div><div class="t" style="left:1471px;top:1313.0px;font-size:28px;line-height:40px;color:#606266;font-weight:normal;width:160px;text-align:center;">奶酪</div><div class="t" style="left:1652.5px;top:1313.0px;font-size:28px;line-height:40px;color:#606266;font-weight:normal;">好吃的<span style="letter-spacing:1.6px">...</span></div><div class="t" style="left:1791px;top:1313.0px;font-size:28px;line-height:40px;color:#606266;font-weight:normal;width:160px;text-align:center;">在售</div><div class="t" style="left:1951px;top:1313.0px;font-size:28px;line-height:40px;color:#606266;font-weight:normal;width:160px;text-align:center;">199</div><div class="t" style="left:2111px;top:1313.0px;font-size:28px;line-height:40px;color:#606266;font-weight:normal;width:160px;text-align:center;">个</div><div class="t" style="left:2271px;top:1313.0px;font-size:28px;line-height:40px;color:#606266;font-weight:normal;width:160px;text-align:center;">10.00</div><div class="t" style="left:2431px;top:1313.0px;font-size:28px;line-height:40px;color:#4f92e8;font-weight:normal;width:200px;text-align:center;">9.00</div><div class="t" style="left:2631px;top:1313.0px;font-size:28px;line-height:40px;color:#4f92e8;font-weight:normal;width:160px;text-align:center;">9.00</div><div class="t" style="left:2817px;top:1290.0px;font-size:28px;line-height:40px;color:#606266;font-weight:normal;">2022-11-16 22:3</div><div class="t" style="left:2791px;top:1336.0px;font-size:28px;line-height:40px;color:#606266;font-weight:normal;width:300px;text-align:center;">6</div><div class="a" style="left:438.5px;top:1498.5px;width:23px;height:23px;border:2px solid #dcdfe6;border-radius:3px;background:#fff;"></div><div class="t" style="left:511px;top:1493.0px;font-size:28px;line-height:40px;color:#606266;font-weight:normal;width:240px;text-align:center;">默认返回仓库</div><div class="t" style="left:751px;top:1493.0px;font-size:28px;line-height:40px;color:#606266;font-weight:normal;width:400px;text-align:center;">早餐速食&gt;小吃</div><div class="t" style="left:1151px;top:1424.0px;font-size:28px;line-height:40px;color:#606266;font-weight:normal;width:160px;text-align:center;">dw2ah2d</div><div class="t" style="left:1151px;top:1470.0px;font-size:28px;line-height:40px;color:#606266;font-weight:normal;width:160px;text-align:center;">w4jkh6d</div><div class="t" style="left:1151px;top:1516.0px;font-size:28px;line-height:40px;color:#606266;font-weight:normal;width:160px;text-align:center;">7j3kh1aj</div><div class="t" style="left:1151px;top:1562.0px;font-size:28px;line-height:40px;color:#606266;font-weight:normal;width:160px;text-align:center;">da</div><div class="t" style="left:1311px;top:1493.0px;font-size:28px;line-height:40px;color:#606266;font-weight:normal;width:160px;text-align:center;">1236841</div><div class="t" style="left:1471px;top:1493.0px;font-size:28px;line-height:40px;color:#606266;font-weight:normal;width:160px;text-align:center;">鸡蛋饼</div><div class="t" style="left:1631px;top:1493.0px;font-size:28px;line-height:40px;color:#606266;font-weight:normal;width:160px;text-align:center;">小吃</div><div class="t" style="left:1791px;top:1493.0px;font-size:28px;line-height:40px;color:#606266;font-weight:normal;width:160px;text-align:center;">在售</div><div class="t" style="left:1951px;top:1493.0px;font-size:28px;line-height:40px;color:#606266;font-weight:normal;width:160px;text-align:center;">499</div><div class="t" style="left:2111px;top:1493.0px;font-size:28px;line-height:40px;color:#606266;font-weight:normal;width:160px;text-align:center;">个</div><div class="t" style="left:2271px;top:1493.0px;font-size:28px;line-height:40px;color:#606266;font-weight:normal;width:160px;text-align:center;">3.00</div><div class="t" style="left:2431px;top:1493.0px;font-size:28px;line-height:40px;color:#4f92e8;font-weight:normal;width:200px;text-align:center;">1.50</div><div class="t" style="left:2631px;top:1493.0px;font-size:28px;line-height:40px;color:#4f92e8;font-weight:normal;width:160px;text-align:center;">5.00</div><div class="t" style="left:2817px;top:1493.0px;font-size:28px;line-height:40px;color:#606266;font-weight:normal;">2022-11-16 22:7:1</div><div class="a" style="left:3001.5px;top:318px;width:18px;height:1338px;background:linear-gradient(to right,rgba(0,0,0,0),rgba(0,0,0,.035) 60%,rgba(0,0,0,.07));"></div><div class="a" style="left:3019.5px;top:318px;width:299.5px;height:1338px;background:#fff;"></div><div class="a" style="left:3019.5px;top:318px;width:299.5px;height:2px;background:#ebedf2;"></div><div class="a" style="left:3019.5px;top:406px;width:299.5px;height:2px;background:#ebedf2;"></div><div class="a" style="left:3019.5px;top:520px;width:299.5px;height:2px;background:#ebedf2;"></div><div class="a" style="left:3019.5px;top:634px;width:299.5px;height:2px;background:#ebedf2;"></div><div class="a" style="left:3019.5px;top:748px;width:299.5px;height:2px;background:#ebedf2;"></div><div class="a" style="left:3019.5px;top:882px;width:299.5px;height:2px;background:#ebedf2;"></div><div class="a" style="left:3019.5px;top:1016px;width:299.5px;height:2px;background:#ebedf2;"></div><div class="a" style="left:3019.5px;top:1150px;width:299.5px;height:2px;background:#ebedf2;"></div><div class="a" style="left:3019.5px;top:1264px;width:299.5px;height:2px;background:#ebedf2;"></div><div class="a" style="left:3019.5px;top:1398px;width:299.5px;height:2px;background:#ebedf2;"></div><div class="a" style="left:3019.5px;top:1624px;width:299.5px;height:2px;background:#ebedf2;"></div><div class="a" style="left:3317px;top:318px;width:2px;height:1338px;background:#ebedf2;"></div><div class="t" style="left:3019.5px;top:344.0px;font-size:28px;line-height:40px;color:#909399;font-weight:bold;width:299.5px;text-align:center;">操作</div><div class="a" style="left:3113px;top:432.0px;width:112px;height:64px;background:#559ff4;border-radius:6px;"></div><div class="t" style="left:3113px;top:445.0px;font-size:24px;line-height:40px;color:#fff;font-weight:normal;width:112px;text-align:center;">上架</div><div class="a" style="left:3113px;top:546.0px;width:112px;height:64px;background:#559ff4;border-radius:6px;"></div><div class="t" style="left:3113px;top:559.0px;font-size:24px;line-height:40px;color:#fff;font-weight:normal;width:112px;text-align:center;">下架</div><div class="a" style="left:3113px;top:660.0px;width:112px;height:64px;background:#559ff4;border-radius:6px;"></div><div class="t" style="left:3113px;top:673.0px;font-size:24px;line-height:40px;color:#fff;font-weight:normal;width:112px;text-align:center;">上架</div><div class="a" style="left:3113px;top:784.0px;width:112px;height:64px;background:#559ff4;border-radius:6px;"></div><div class="t" style="left:3113px;top:797.0px;font-size:24px;line-height:40px;color:#fff;font-weight:normal;width:112px;text-align:center;">下架</div><div class="a" style="left:3113px;top:918.0px;width:112px;height:64px;background:#559ff4;border-radius:6px;"></div><div class="t" style="left:3113px;top:931.0px;font-size:24px;line-height:40px;color:#fff;font-weight:normal;width:112px;text-align:center;">上架</div><div class="a" style="left:3113px;top:1052.0px;width:112px;height:64px;background:#559ff4;border-radius:6px;"></div><div class="t" style="left:3113px;top:1065.0px;font-size:24px;line-height:40px;color:#fff;font-weight:normal;width:112px;text-align:center;">上架</div><div class="a" style="left:3113px;top:1176.0px;width:112px;height:64px;background:#559ff4;border-radius:6px;"></div><div class="t" style="left:3113px;top:1189.0px;font-size:24px;line-height:40px;color:#fff;font-weight:normal;width:112px;text-align:center;">下架</div><div class="a" style="left:3113px;top:1300.0px;width:112px;height:64px;background:#559ff4;border-radius:6px;"></div><div class="t" style="left:3113px;top:1313.0px;font-size:24px;line-height:40px;color:#fff;font-weight:normal;width:112px;text-align:center;">下架</div><div class="a" style="left:3113px;top:1480.0px;width:112px;height:64px;background:#559ff4;border-radius:6px;"></div><div class="t" style="left:3113px;top:1493.0px;font-size:24px;line-height:40px;color:#fff;font-weight:normal;width:112px;text-align:center;">下架</div><div class="a" style="left:360px;top:1580px;width:2994px;height:76px;background:linear-gradient(to bottom,rgba(0,0,0,0),rgba(0,0,0,.065));-webkit-mask-image:linear-gradient(to right,#000 0,#000 2750px,rgba(0,0,0,0) 2960px);"></div><div class="t" style="left:2549px;top:1508px;font-size:84px;line-height:110px;color:#000;-webkit-text-stroke:3.5px #000;letter-spacing:0px;">头条</div><div class="t" style="left:2737px;top:1508px;font-size:84px;line-height:110px;color:#000;-webkit-text-stroke:3.5px #000;letter-spacing:0px;">@</div><div class="t" style="left:2833px;top:1508px;font-size:84px;line-height:110px;color:#000;-webkit-text-stroke:3.5px #000;letter-spacing:7px;">Echa</div><div class="t" style="left:3050px;top:1508px;font-size:84px;line-height:110px;color:#000;-webkit-text-stroke:3.5px #000;letter-spacing:0px;">攻城狮</div><div class="t" style="left:2552.5px;top:1504.5px;font-size:84px;line-height:110px;color:#fff;letter-spacing:0px;">头条</div><div class="t" style="left:2740.5px;top:1504.5px;font-size:84px;line-height:110px;color:#fff;letter-spacing:0px;">@</div><div class="t" style="left:2836.5px;top:1504.5px;font-size:84px;line-height:110px;color:#fff;letter-spacing:7px;">Echa</div><div class="t" style="left:3053.5px;top:1504.5px;font-size:84px;line-height:110px;color:#fff;letter-spacing:0px;">攻城狮</div></body></html>
